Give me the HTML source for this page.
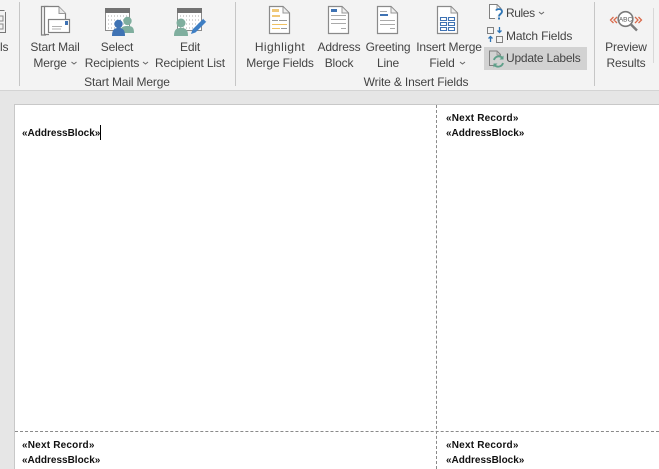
<!DOCTYPE html>
<html><head><meta charset="utf-8">
<style>
html,body{margin:0;padding:0}
body{width:659px;height:469px;overflow:hidden;position:relative;background:#e6e6e6;font-family:"Liberation Sans",sans-serif}
#rib{position:absolute;left:0;top:0;width:659px;height:90px;background:#f3f3f3;border-bottom:1px solid #d4d4d4}
.t{position:absolute;font-size:12px;line-height:16px;color:#444;white-space:nowrap;transform:translateX(-50%);letter-spacing:-.15px}
.l{position:absolute;font-size:12px;line-height:16px;color:#444;white-space:nowrap;letter-spacing:-.15px}
.sep{position:absolute;width:1px;background:#c6c6c6}
.d{position:absolute;font-size:10px;line-height:15px;font-weight:bold;color:#111;white-space:nowrap;letter-spacing:0}
.n{letter-spacing:.2px}
svg{position:absolute;left:0;top:0}
</style></head><body>
<div id="rib"></div>
<div class="sep" style="left:19px;top:2px;height:84px"></div>
<div class="sep" style="left:235px;top:2px;height:84px"></div>
<div class="sep" style="left:594px;top:2px;height:84px"></div>
<div class="sep" style="left:653px;top:8px;height:55px;background:#d8d8d8"></div>
<div style="position:absolute;left:484px;top:47px;width:103px;height:23px;background:#d2d2d2"></div>

<div class="l" style="left:0;top:39px">ls</div>
<div class="t" style="left:55px;top:39px">Start Mail</div>
<div class="t" style="left:50px;top:55px">Merge</div>
<div class="t" style="left:117px;top:39px">Select</div>
<div class="t" style="left:112px;top:55px">Recipients</div>
<div class="t" style="left:190px;top:39px">Edit</div>
<div class="t" style="left:190px;top:55px">Recipient List</div>
<div class="t" style="left:127px;top:74px">Start Mail Merge</div>
<div class="t" style="left:280px;top:39px;letter-spacing:.4px">Highlight</div>
<div class="t" style="left:280px;top:55px">Merge Fields</div>
<div class="t" style="left:339px;top:39px">Address</div>
<div class="t" style="left:339px;top:55px">Block</div>
<div class="t" style="left:388px;top:39px">Greeting</div>
<div class="t" style="left:388px;top:55px">Line</div>
<div class="t" style="left:449px;top:39px">Insert Merge</div>
<div class="t" style="left:442px;top:55px">Field</div>
<div class="t" style="left:416px;top:74px">Write &amp; Insert Fields</div>
<div class="l" style="left:506px;top:5px;letter-spacing:-.4px">Rules</div>
<div class="l" style="left:506px;top:28px">Match Fields</div>
<div class="l" style="left:506px;top:50px;letter-spacing:-.22px">Update Labels</div>
<div class="t" style="left:626px;top:39px">Preview</div>
<div class="t" style="left:626px;top:55px">Results</div>

<svg width="659" height="110" viewBox="0 0 659 110" fill="none">
<!-- chevrons -->
<g stroke="#666" stroke-width="1">
<path d="M71.500 62l2.500 2 2.500-2M143 62l2.500 2 2.500-2M460 62l2.500 2 2.500-2M539 12l2.500 2 2.500-2"/>
</g>
<!-- left clipped icon -->
<path d="M0 10.500h4.500M5.500 12v20.500H0" stroke="#777"/>
<path d="M0 16h3v5H0M0 24h3v5H0" stroke="#888"/>
<!-- Start Mail Merge -->
<path d="M48.500 6.500H41.500V35H46" stroke="#808080" stroke-width="1.200"/>
<path d="M49 34.500H44.500V6.500H58.500l7 7V19" stroke="#808080" stroke-width="1.200" fill="#fff"/>
<path d="M59 7v6.500h6.500" stroke="#999" fill="#e8e8e8"/>
<rect x="48.500" y="19.500" width="21" height="13" fill="#fff" stroke="#808080" stroke-width="1.200"/>
<rect x="65" y="21" width="3" height="4" fill="#3f73b4"/>
<path d="M52 26.500h10M52 29h9" stroke="#b0b0b0"/>
<!-- Select Recipients -->
<rect x="105.500" y="8.500" width="24" height="22" fill="#fff" stroke="#8a8a8a"/>
<rect x="105" y="8" width="25" height="5" fill="#727272"/>
<path d="M108 16h20M108 20h20M108 24h20M108 28h20" stroke="#a8a8a8" stroke-dasharray="1 2"/>
<circle cx="127.500" cy="21" r="4.200" fill="#7fae9e"/>
<path d="M120 33c0-6 3-7 7.500-7s6.500 1 6.500 7z" fill="#7fae9e"/>
<circle cx="118.500" cy="24" r="4.200" fill="#3f73b4"/>
<path d="M112 36c0-7 3-8 6.500-8s6.500 1 6.500 8z" fill="#3f73b4"/>
<!-- Edit Recipient -->
<rect x="177.500" y="8.500" width="24" height="22" fill="#fff" stroke="#8a8a8a"/>
<rect x="177" y="8" width="25" height="5" fill="#727272"/>
<path d="M180 16h20M180 20h20M180 24h20M180 28h20" stroke="#a8a8a8" stroke-dasharray="1 2"/>
<circle cx="181" cy="23" r="4.500" fill="#7fae9e"/>
<path d="M174 36c0-7 3-8 7-8s7 1 7 8z" fill="#7fae9e"/>
<path d="M191 34l1.500-4.500 11-11 3 3-11 11z" fill="#3f7fc4"/>
<path d="M203.500 18.500l3 3" stroke="#f3f3f3"/>
<!-- Highlight -->
<path d="M269.500 6.500H283l6.500 6.500v20.500h-20z" fill="#fff" stroke="#8a8a8a" stroke-width="1.200"/>
<path d="M283 7v6h6" fill="#eee" stroke="#999"/>
<rect x="272" y="9" width="7" height="3" fill="#f0c878"/>
<rect x="272" y="15" width="8" height="2" fill="#f0c878"/>
<path d="M272 20.500h6M279 20.500h8" stroke="#999"/>
<path d="M272 24.500h15" stroke="#f0c060"/>
<path d="M272 28.500h8" stroke="#f0c060"/><path d="M281 28.500h6" stroke="#999"/>
<!-- Address Block -->
<path d="M328.500 6.500H342l6.500 6.500v20.500h-20z" fill="#fff" stroke="#8a8a8a" stroke-width="1.200"/>
<path d="M342 7v6h6" fill="#eee" stroke="#999"/>
<rect x="331" y="9" width="6" height="3" fill="#3f73b4"/>
<path d="M331 15.500h15M331 19.500h15M331 23.500h15M341 28.500h5" stroke="#aaa"/>
<!-- Greeting Line -->
<path d="M377.500 6.500H391l6.500 6.500v20.500h-20z" fill="#fff" stroke="#8a8a8a" stroke-width="1.200"/>
<path d="M391 7v6h6" fill="#eee" stroke="#999"/>
<path d="M380 11.500h7M380 20.500h15M380 24.500h15M390 28.500h5" stroke="#aaa"/>
<rect x="380" y="14" width="8" height="2" fill="#3f73b4"/>
<!-- Insert Merge Field -->
<path d="M437.500 6.500H451l6.500 6.500v20.500h-20z" fill="#fff" stroke="#8a8a8a" stroke-width="1.200"/>
<path d="M451 7v6h6" fill="#eee" stroke="#999"/>
<path d="M440.500 17.500h6v3h-6zM448.500 17.500h6v3h-6zM440.500 22.500h6v3h-6zM448.500 22.500h6v3h-6zM440.500 27.500h6v3h-6zM448.500 27.500h6v3h-6z" stroke="#3f73b4" stroke-width="1.100"/>
<!-- Rules -->
<path d="M495 18.500h-5.500V4.500H497l4 4v2" stroke="#808080" fill="#fff"/>
<path d="M497 5v4h4" stroke="#999"/>
<path d="M496 10.500c1-2 6-2 6 1 0 2.500-3 2.500-3 5" stroke="#2e75b6" stroke-width="1.800"/>
<rect x="498" y="17.500" width="2" height="2" fill="#2e75b6"/>
<!-- Match Fields -->
<rect x="487.500" y="27.500" width="6" height="6" stroke="#808080"/>
<rect x="496.500" y="36.500" width="6" height="6" stroke="#808080"/>
<path d="M499.500 27v5M497.500 30.500l2 2 2-2" stroke="#2e75b6" stroke-width="1.300"/>
<path d="M490.500 42v-5M488.500 38.500l2-2 2 2" stroke="#2e75b6" stroke-width="1.300"/>
<!-- Update Labels -->
<path d="M494 65.500h-4.500V51H497l3.500 3.500V57" stroke="#808080" fill="none"/>
<path d="M497 51.500v3.500h3.500" stroke="#999"/>
<path d="M494 60a5 5 0 0 1 8.500-2M503 63a5 5 0 0 1-8.500 2" stroke="#5fa08a" stroke-width="1.900"/>
<path d="M503.500 55.500v4h-4zM493.500 67.500v-4h4z" fill="#5fa08a"/>
<!-- Preview Results -->
<path d="M613.500 17l-3 3 3 3M617 17l-3 3 3 3M635 17l3 3-3 3M638.500 17l3 3-3 3" stroke="#d9694a" stroke-width="1.300"/>
<circle cx="625.500" cy="19" r="7.300" fill="#fff" stroke="#7a7a7a" stroke-width="1.600"/>
<path d="M631 24.500l6 6" stroke="#7a7a7a" stroke-width="2.400"/>
<text x="625.500" y="21.500" font-family="Liberation Sans" font-size="6.500" fill="#555" text-anchor="middle">ABC</text>
</svg>

<!-- document -->
<div style="position:absolute;left:14px;top:104px;width:645px;height:365px;background:#fff;border-left:1px solid #c8c8c8;border-top:1px solid #c8c8c8;box-sizing:border-box"></div>
<div style="position:absolute;left:436px;top:105px;height:364px;border-left:1px dashed #8a8a8a"></div>
<div style="position:absolute;left:15px;top:431px;width:644px;border-top:1px dashed #8a8a8a"></div>
<div class="d" style="left:22px;top:126px">«AddressBlock»</div>
<div style="position:absolute;left:100px;top:125px;width:1px;height:15px;background:#000"></div>
<div class="d n" style="left:446px;top:111px">«Next Record»</div>
<div class="d" style="left:446px;top:126px">«AddressBlock»</div>
<div class="d n" style="left:22px;top:438px">«Next Record»</div>
<div class="d" style="left:22px;top:453px">«AddressBlock»</div>
<div class="d n" style="left:446px;top:438px">«Next Record»</div>
<div class="d" style="left:446px;top:453px">«AddressBlock»</div>
</body></html>
